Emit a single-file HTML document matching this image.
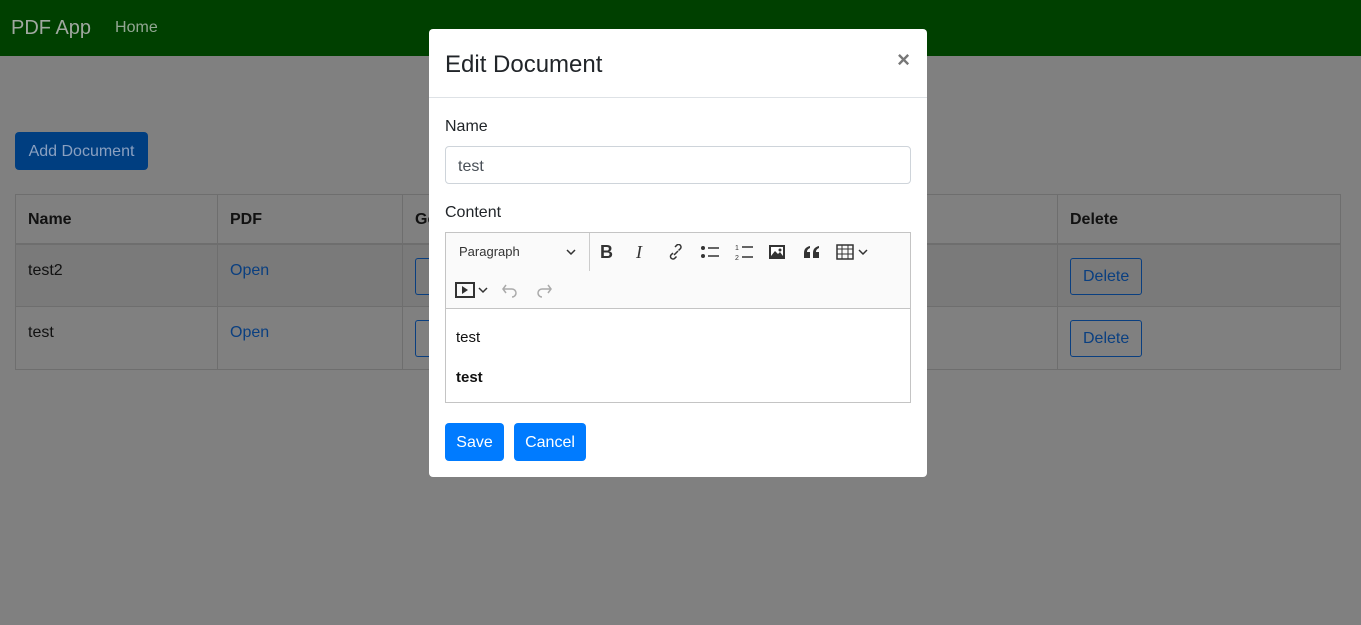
<!DOCTYPE html>
<html><head><style>
*{box-sizing:border-box;margin:0;padding:0}
body{width:1361px;height:625px;background:#808080;font-family:"Liberation Sans",sans-serif;font-size:16px;color:#111;position:relative;overflow:hidden}
.nav{height:56px;background:#004000;display:flex;align-items:center}
.brand{color:#a0a8a0;font-size:20px;margin-left:11px}
.home{color:#b8c0b8;font-size:16px;margin-left:24px;opacity:.8}
.add{position:absolute;left:15px;top:132px;width:133px;height:38px;background:#003e80;border-radius:4px;color:#8aa0c0;font-size:16px;line-height:40px;text-align:center}
table{position:absolute;left:15px;top:194px;width:1326px;border-collapse:collapse}
td,th{border:1px solid #6e6e6e;text-align:left;padding:0 12px;vertical-align:top;font-size:16px;line-height:20px}
th{height:49px;font-weight:bold;color:#111;padding-top:15px}
td{height:63px;padding-top:16px}
tr.h td{background:#7a7a7a}
thead tr{border-bottom:2px solid #6e6e6e}
a{color:#0a3f80;text-decoration:none}
.db{display:inline-block;border:1px solid #0a3f80;color:#0a3f80;border-radius:3px;padding:8px 12px 7px;margin-top:-3px}
.ob{display:inline-block;border:1px solid #0a3f80;width:20px;height:37px;border-right:none;border-radius:3px 0 0 3px;margin-top:-3px;vertical-align:top}
.modal{position:absolute;left:429px;top:29px;width:498px;height:448px;background:#fff;border-radius:4px}
.mh{height:69px;border-bottom:1px solid #dee2e6;position:relative}
.mh h5{position:absolute;left:16px;top:22px;font-size:24px;font-weight:normal;color:#212529}
.x{position:absolute;right:17px;top:18px;font-size:22px;color:#777;font-weight:bold}
.lbl{position:absolute;left:16px;color:#212529;font-size:16px}
.inp{position:absolute;left:16px;top:117px;width:466px;height:38px;border:1px solid #ced4da;border-radius:4px;padding:11px 12px;color:#495057}
.ed{position:absolute;left:16px;top:203px;width:466px;height:171px;border:1px solid #c4c4c4}
.tb{height:76px;background:#fafafa;border-bottom:1px solid #c4c4c4;position:relative}
.ic{position:absolute;font-size:14px;color:#333}
.btn{position:absolute;top:394px;height:38px;background:#007bff;color:#fff;border-radius:4px;line-height:40px;text-align:center;font-size:16px}
</style></head><body>
<div class="nav"><span class="brand">PDF App</span><span class="home">Home</span></div>
<div class="add">Add Document</div>
<table>
<thead><tr><th style="width:202px">Name</th><th style="width:185px">PDF</th><th style="width:655px">Ge</th><th>Delete</th></tr></thead>
<tr class="h"><td>test2</td><td><a>Open</a></td><td><span class="ob"></span></td><td><span class="db">Delete</span></td></tr>
<tr><td>test</td><td><a>Open</a></td><td><span class="ob"></span></td><td><span class="db">Delete</span></td></tr>
</table>
<div class="modal">
<div class="mh"><h5>Edit Document</h5><span class="x">×</span></div>
<div class="lbl" style="top:89px">Name</div>
<div class="inp">test</div>
<div class="lbl" style="top:175px">Content</div>
<div class="ed">
<div class="tb">
<span class="ic" style="left:13px;top:11px;font-size:13px">Paragraph</span>
<svg style="position:absolute;left:120px;top:15px" width="10" height="8"><path d="M1 2l4 4 4-4" stroke="#333" stroke-width="1.5" fill="none"/></svg>
<div style="position:absolute;left:143px;top:0;width:1px;height:38px;background:#ccc"></div>
<span class="ic" style="left:154px;top:9px;font-size:18px;font-weight:bold">B</span>
<span class="ic" style="left:190px;top:9px;font-size:18px;font-style:italic;font-family:'Liberation Serif'">I</span>
<svg style="position:absolute;left:221px;top:11px" width="18" height="18"><path d="M7 11l4-4M6 9l-2 2a2.5 2.5 0 003.5 3.5L9.5 12.5M11.5 6.5l2-2A2.5 2.5 0 0010 1L8 3" stroke="#333" stroke-width="1.5" fill="none"/></svg>
<svg style="position:absolute;left:254px;top:11px" width="20" height="16"><circle cx="3" cy="4" r="2" fill="#333"/><circle cx="3" cy="12" r="2" fill="#333"/><path d="M8 4h11M8 12h11" stroke="#333" stroke-width="1.5"/></svg>
<svg style="position:absolute;left:288px;top:10px" width="20" height="18"><text x="1" y="7" font-size="7" fill="#333">1</text><text x="1" y="17" font-size="7" fill="#333">2</text><path d="M8 4h11M8 14h11" stroke="#333" stroke-width="1.5"/></svg>
<svg style="position:absolute;left:322px;top:11px" width="18" height="16"><rect x="1" y="1" width="16" height="14" fill="#333"/><rect x="3" y="3" width="12" height="9" fill="#fff"/><path d="M3 12l4-5 3 3 2-2 3 4z" fill="#333"/><circle cx="12" cy="6" r="1.5" fill="#333"/></svg>
<svg style="position:absolute;left:357px;top:12px" width="18" height="14"><path d="M1 13V8c0-4 2-6 6-7v2c-2 1-3 2-3 4h3v6zM10 13V8c0-4 2-6 6-7v2c-2 1-3 2-3 4h3v6z" fill="#333"/></svg>
<svg style="position:absolute;left:390px;top:11px" width="34" height="16"><rect x="1" y="1" width="16" height="14" fill="none" stroke="#333" stroke-width="1.5"/><path d="M1 5h16M1 10h16M6 1v14M12 1v14" stroke="#333"/><path d="M23 6l4 4 4-4" stroke="#333" stroke-width="1.5" fill="none"/></svg>
<svg style="position:absolute;left:9px;top:49px" width="34" height="16"><rect x="1" y="1" width="18" height="14" fill="none" stroke="#333" stroke-width="2"/><path d="M7 4v8l6-4z" fill="#333"/><path d="M24 6l4 4 4-4" stroke="#333" stroke-width="1.5" fill="none"/></svg>
<svg style="position:absolute;left:55px;top:49px" width="18" height="16"><path d="M5 3L2 7l3 4M2 7h9a4 4 0 010 8" stroke="#aaa" stroke-width="1.5" fill="none"/></svg>
<svg style="position:absolute;left:89px;top:49px" width="18" height="16"><path d="M13 3l3 4-3 4M16 7H7a4 4 0 000 8" stroke="#aaa" stroke-width="1.5" fill="none"/></svg>
</div>
<div style="position:absolute;left:10px;top:96px;color:#111;font-size:15px">test</div>
<div style="position:absolute;left:10px;top:136px;color:#111;font-size:15px;font-weight:bold">test</div>
</div>
<div class="btn" style="left:16px;width:59px">Save</div>
<div class="btn" style="left:85px;width:72px">Cancel</div>
</div>
</body></html>
